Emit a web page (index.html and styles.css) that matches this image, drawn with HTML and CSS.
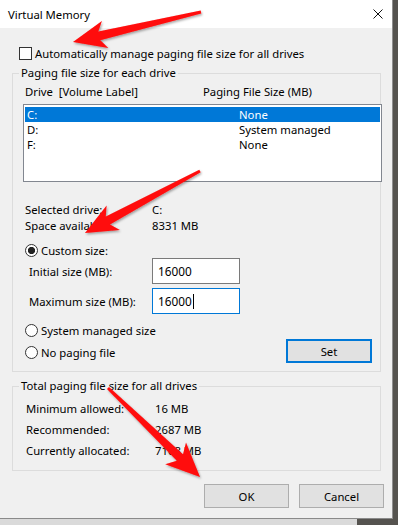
FILE: index.html
```html
<!DOCTYPE html>
<html>
<head>
<meta charset="utf-8">
<title>Virtual Memory</title>
<link rel="stylesheet" href="styles.css">
</head>
<body>
<div class="screen">
  <div class="dialog">
    <div class="titlebar">
      <span class="title">Virtual Memory</span>
      <svg class="close" width="10" height="10" viewBox="0 0 10 10"><path d="M0.5 0.5L9.5 9.5M9.5 0.5L0.5 9.5" stroke="#111" stroke-width="1" fill="none"/></svg>
    </div>
    <div class="content">
      <div class="check-row"><span class="checkbox"></span><span>Automatically manage paging file size for all drives</span></div>

      <fieldset class="group group-drives">
        <legend>Paging file size for each drive</legend>
        <div class="list-head"><span class="col-head">Drive&nbsp; [Volume Label]</span><span>Paging File Size (MB)</span></div>
        <div class="listbox">
          <div class="row selected"><span class="col-drive">C:</span><span>None</span></div>
          <div class="row"><span class="col-drive">D:</span><span>System managed</span></div>
          <div class="row"><span class="col-drive">F:</span><span>None</span></div>
        </div>
        <div class="info">
          <div class="kv"><span class="k">Selected drive:</span><span>C:</span></div>
          <div class="kv"><span class="k">Space available:</span><span>8331 MB</span></div>
        </div>
        <div class="radio-row custom"><span class="radio checked"></span><span>Custom size:</span></div>
        <div class="field-row"><span class="field-label">Initial size (MB):</span><div class="input">16000</div></div>
        <div class="field-row second"><span class="field-label">Maximum size (MB):</span><div class="input focused">16000<span class="caret"></span></div></div>
        <div class="radio-row sys"><span class="radio"></span><span>System managed size</span></div>
        <div class="last-row">
          <div class="radio-row"><span class="radio"></span><span>No paging file</span></div>
          <button class="btn set">Set</button>
        </div>
      </fieldset>

      <fieldset class="group group-total">
        <legend>Total paging file size for all drives</legend>
        <div class="trow"><span class="k">Minimum allowed:</span><span>16 MB</span></div>
        <div class="trow"><span class="k">Recommended:</span><span>2687 MB</span></div>
        <div class="trow"><span class="k">Currently allocated:</span><span>7168 MB</span></div>
      </fieldset>

      <div class="buttons">
        <button class="btn">OK</button>
        <button class="btn">Cancel</button>
      </div>
    </div>
  </div>
  <div class="below"></div>

  <svg class="arrows" width="398" height="525" viewBox="0 0 398 525">
    <defs>
      <filter id="sh" x="-10%" y="-10%" width="130%" height="130%">
        <feDropShadow dx="1" dy="1.5" stdDeviation="1" flood-color="#000" flood-opacity="0.35"/>
      </filter>
    </defs>
    <g fill="#ff0a0a" filter="url(#sh)">
      <polygon points="73,42 101.9,20.9 98.3,31.4 200.7,10.5 201.3,13.5 100.3,40.2 108.3,48.1"/>
      <polygon points="85,233 106.6,205.5 105.8,216.6 199.3,169.7 200.7,172.3 110,224.6 119.9,230.1"/>
      <polygon points="200,477 186,442.6 183,454.3 109,386.9 107,389.1 176.8,460.7 165.2,464.2"/>
    </g>
  </svg>
</div>
</body>
</html>
```

FILE: styles.css
```css
* {
  box-sizing: border-box;
}

html, body {
  margin: 0;
  padding: 0;
}

body {
  width: 398px;
  height: 525px;
  overflow: hidden;
  font-family: "Noto Sans", "Open Sans", sans-serif;
  font-size: 11.3px;
  color: #000;
  background: #55534f;
}

.screen {
  position: relative;
  width: 398px;
  height: 525px;
  background: #55534f;
}

.dialog {
  width: 393px;
  height: 519px;
  background: #f0f0f0;
  border-right: 1px solid #8f8f8f;
  border-bottom: 1px solid #8a8a8a;
  display: flex;
  flex-direction: column;
}

.below {
  width: 357px;
  height: 6px;
  background: #dadada;
}

.titlebar {
  height: 28px;
  background: #fff;
  display: flex;
  align-items: center;
  justify-content: space-between;
  padding: 0 9px 0 8px;
  flex: none;
}

.title {
  font-size: 11.3px;
}

.close {
  display: block;
}

.content {
  padding: 19px 0 0 12px;
}

.check-row {
  display: flex;
  align-items: center;
  gap: 3px;
  height: 13px;
  margin-left: 7px;
}

.checkbox {
  width: 13px;
  height: 13px;
  border: 1px solid #333;
  background: #fff;
  flex: none;
}

.group {
  margin: 0;
  width: 369px;
  min-width: 0;
  border: 1px solid #dcdcdc;
  padding: 0 0 8px 10px;
}

.group legend {
  padding: 0 2px;
  margin-left: -4px;
  line-height: 16px;
  font-size: 11.3px;
}

.group-drives {
  margin-top: 5px;
}

.list-head {
  margin-top: 3px;
  height: 15px;
  line-height: 15px;
  display: flex;
  padding-left: 2px;
}

.col-head {
  width: 178px;
}

.listbox {
  margin-top: 5px;
  width: 359px;
  height: 78px;
  border: 1px solid #828790;
  background: #fff;
  padding: 2px 1px;
}

.row {
  height: 15px;
  line-height: 15px;
  display: flex;
  padding-left: 2px;
}

.row.selected {
  background: #0078d7;
  color: #fff;
}

.col-drive {
  width: 212px;
}

.info {
  margin-top: 20px;
  margin-left: 2px;
}

.kv {
  display: flex;
  height: 16px;
  line-height: 16px;
}

.kv .k {
  width: 127px;
}

.radio-row {
  display: flex;
  align-items: center;
  gap: 3px;
  height: 16px;
  margin-left: 2px;
}

.radio {
  width: 13px;
  height: 13px;
  border-radius: 50%;
  border: 1px solid #333;
  background: #fff;
  flex: none;
}

.radio.checked {
  background: radial-gradient(circle, #222 0 3.3px, #fff 3.9px);
}

.custom {
  margin-top: 8px;
}

.field-row {
  display: flex;
  align-items: center;
  margin-left: 6px;
}

.field-row.second {
  margin-top: 4px;
}

.field-label {
  width: 123px;
}

.input {
  width: 88px;
  height: 26px;
  border: 1px solid #7a7a7a;
  background: #fff;
  padding-left: 5px;
  display: flex;
  align-items: center;
  font-size: 11.8px;
}

.input.focused {
  border-color: #0078d7;
}

.caret {
  width: 1px;
  height: 15px;
  background: #000;
  margin-left: 1px;
}

.sys {
  margin-top: 8px;
}

.last-row {
  display: flex;
  align-items: center;
  justify-content: space-between;
  height: 24px;
  margin-top: 1px;
  padding-right: 8px;
}

.last-row .radio-row {
  margin-top: 2px;
}

.btn {
  font-family: "Noto Sans", "Open Sans", sans-serif;
  font-size: 11.3px;
  color: #000;
  background: #e1e1e1;
  border: 1px solid #adadad;
  height: 24px;
  width: 85px;
  padding: 0;
  margin: 0;
}

.btn.set {
  width: 86px;
  border: 2px solid #0078d7;
}

.group-total {
  margin-top: 6px;
  padding: 4px 0 9px 10px;
}

.trow {
  display: flex;
  height: 21px;
  line-height: 21px;
  margin-left: 3px;
}

.trow .k {
  width: 129px;
}

.buttons {
  display: flex;
  justify-content: flex-end;
  gap: 10px;
  margin-top: 13px;
  width: 372px;
}

.arrows {
  position: absolute;
  left: 0;
  top: 0;
  pointer-events: none;
}
```
